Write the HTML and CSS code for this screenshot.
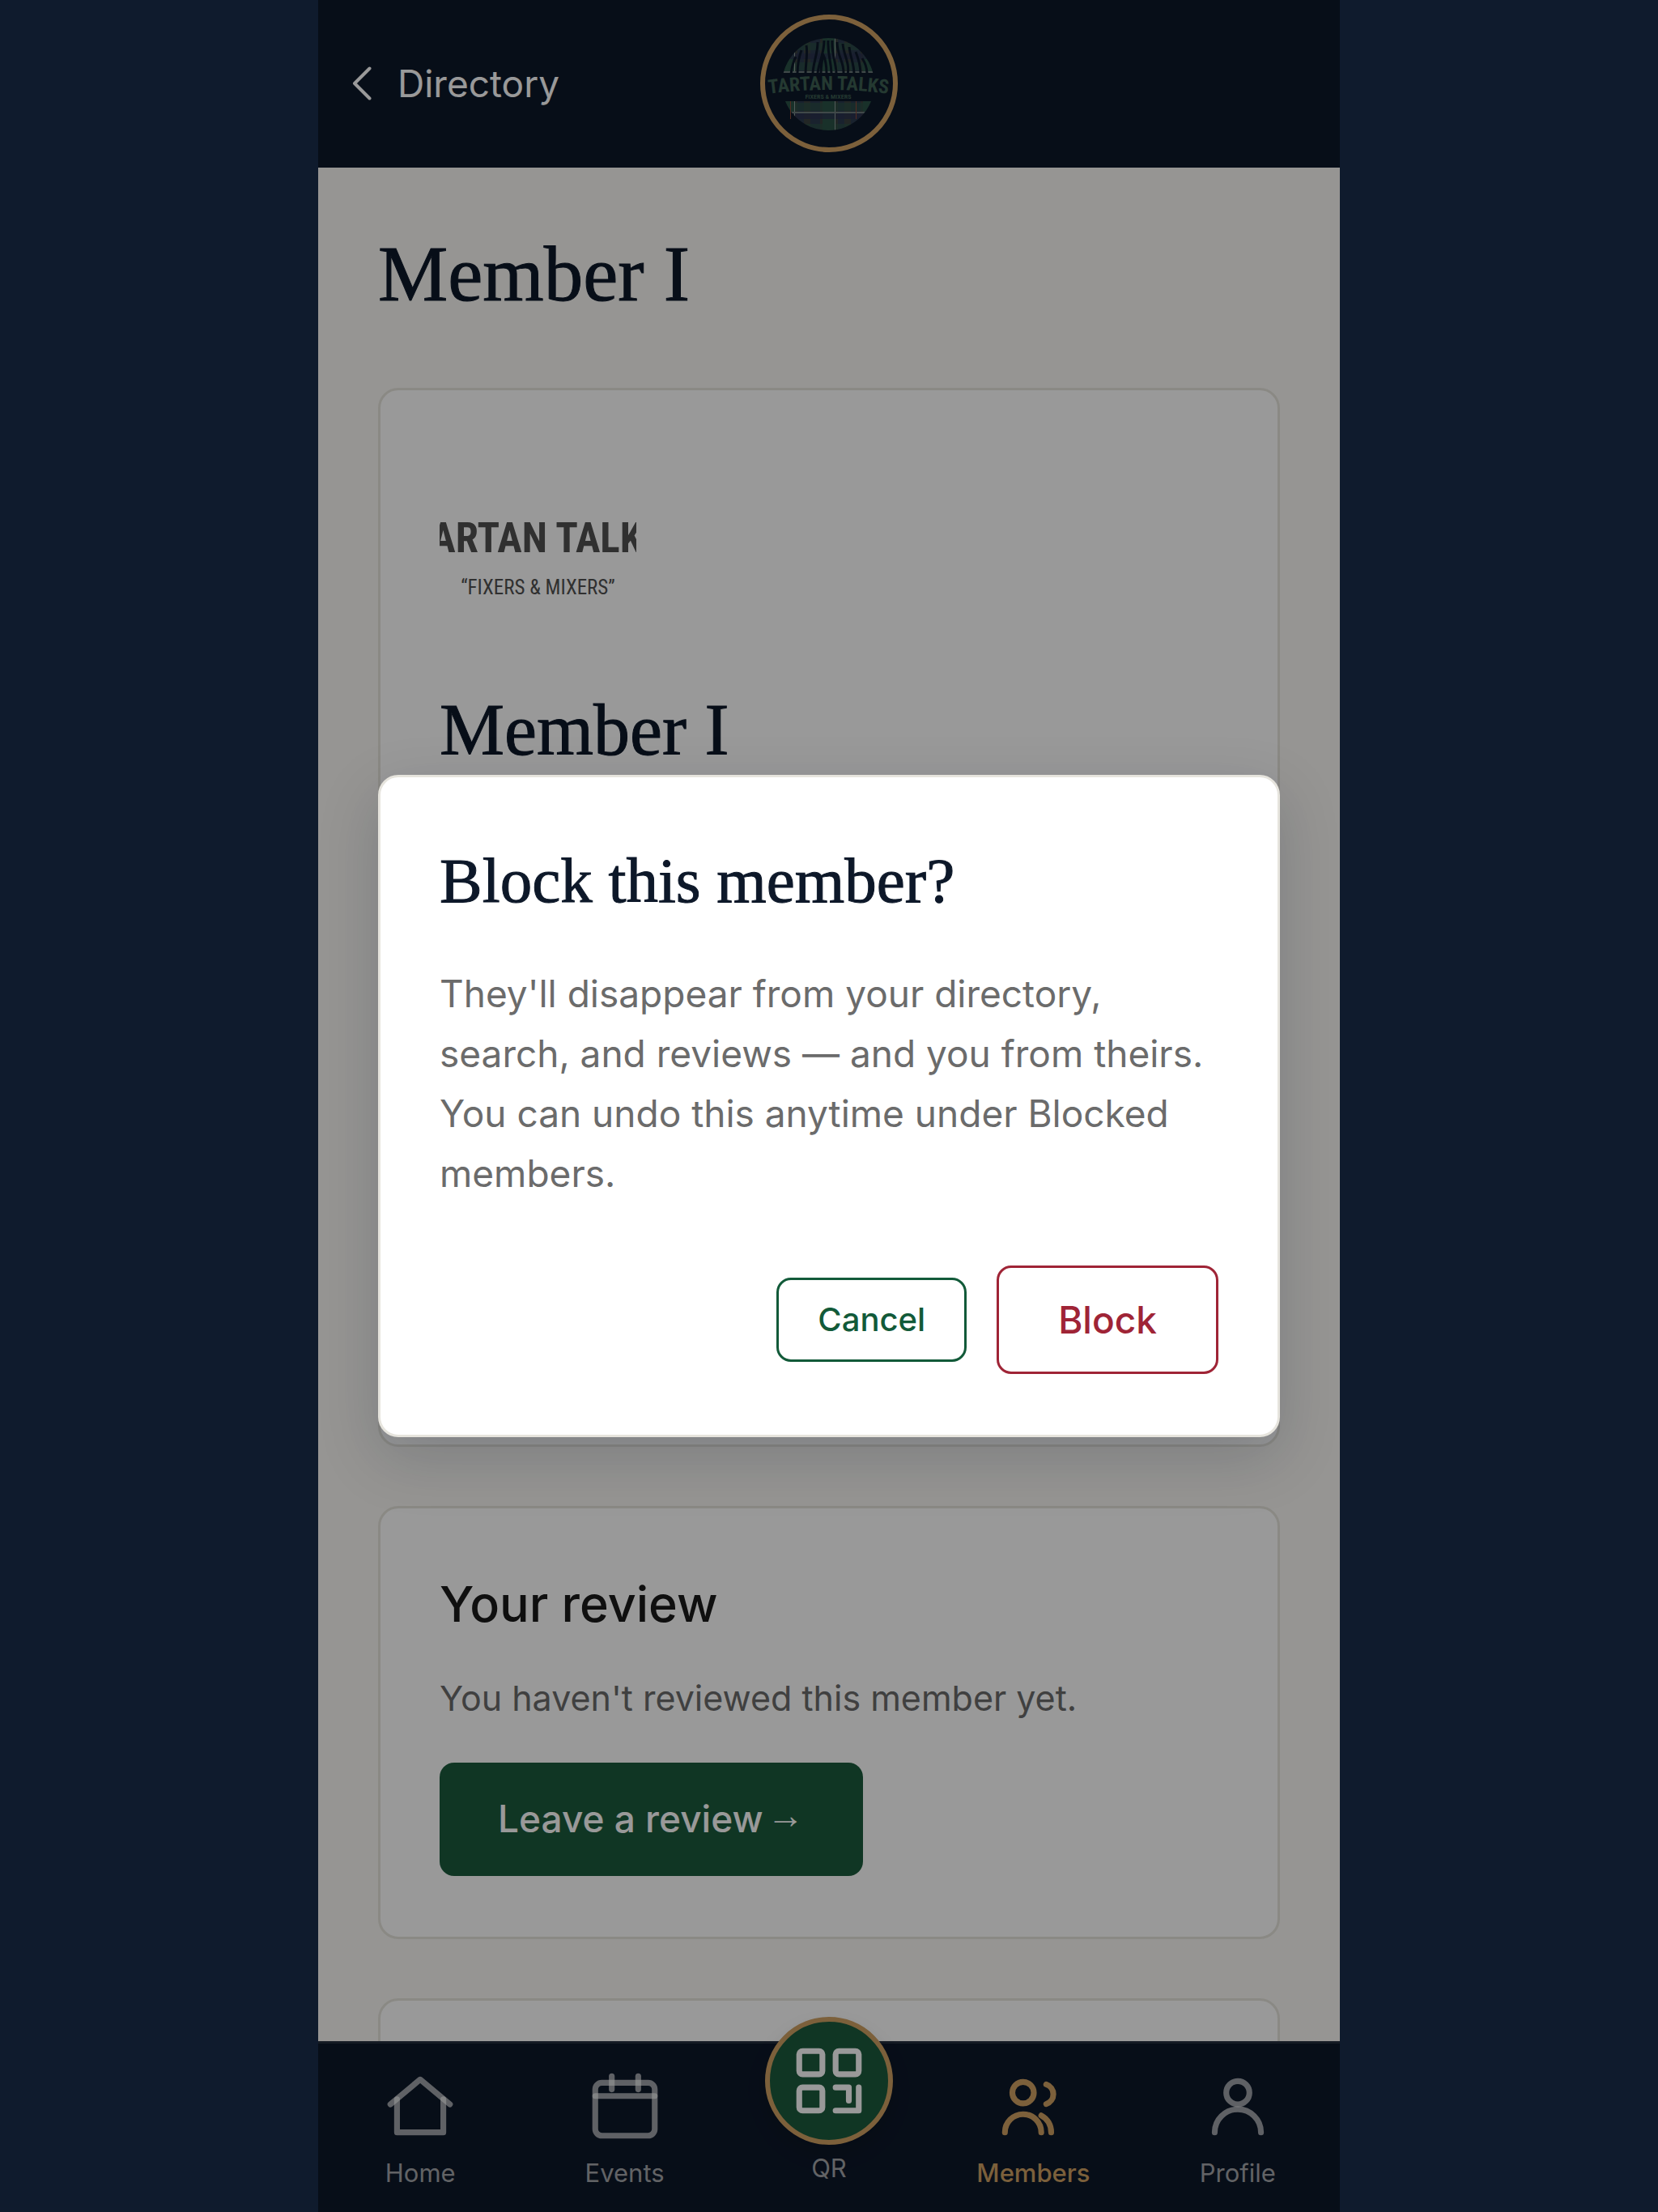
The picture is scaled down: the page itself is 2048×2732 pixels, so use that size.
FILE: index.html
```html
<!DOCTYPE html>
<html lang="en">
<head>
  <meta charset="utf-8">
  <meta name="viewport" content="width=device-width, initial-scale=1">
  <title>Member I – Tartan Talks</title>
  <link rel="stylesheet" href="styles.css">
</head>
<body>
  <div class="app">
    <header class="topbar">
      <a class="back" href="#directory">
        <svg class="back-icon" viewBox="0 0 24 42" aria-hidden="true"><path d="M21.500 2.500 3 21l18.500 18.500"/></svg>
        Directory
      </a>
      <a class="brand" href="#home" aria-label="Tartan Talks home">
        <svg viewBox="25 24 158 158" aria-hidden="true">
          <defs>
            <pattern id="tartan" width="50" height="50" x="81" y="89" patternUnits="userSpaceOnUse">
              <rect width="50" height="50" fill="#3a403e"/>
              <path fill="#2a3a4d" d="M0 0h12v50H0zM34 0h8v50h-8z"/>
              <path fill="#2a5346" d="M15 0h16v50H15z"/>
              <path fill="#2a5346" fill-opacity=".6" d="M0 38h50v10H0zM0 14h50v9H0z"/>
              <path fill="#2a3050" fill-opacity=".7" d="M0 0h50v8H0zM0 27h50v7H0z"/>
              <path stroke="#8a9a97" d="M30.500 0v50"/>
              <path stroke="#6c7a7b" stroke-width="2" d="M0 50h50M0 0h50"/>
            </pattern>
            <clipPath id="dome"><path d="M45 90h116V40H45z"/></clipPath>
            <clipPath id="bowl"><path d="M45 125h116v40H45z"/></clipPath>
            <path id="arch" d="M28 116Q103 106 179 116"/>
          </defs>
          <circle cx="103" cy="104" r="57" fill="url(#tartan)" clip-path="url(#dome)"/>
          <g class="grain" clip-path="url(#dome)">
            <path d="M57 92c1-9 3-16 6-22M65 92c0-12 2-22 5-30M75 92c0-14 3-25 1-36M84 92c0-14 6-24 6-40M90 92c0-12 8-24 8-42M94 92c0-9 2-22 3-24 3 6 4 16 4 24"/>
            <path d="M107 92c0-16-5-24-4-42M113 92c0-16-6-24-5-42M122 92c1-16-8-22-8-40M127 92c3-14-5-24-6-38M135 92c0-14-5-22-6-34M143 92c0-10-2-18-6-28M151 92c0-8-2-14-6-20"/>
          </g>
          <circle cx="103" cy="104" r="57" fill="url(#tartan)" clip-path="url(#bowl)"/>
          <path d="M56.500 125v22M137.500 125v22" stroke="#8a4a38" clip-path="url(#bowl)"/>
          <text class="logo-name"><textPath href="#arch" startOffset="50%">TARTAN TALKS</textPath></text>
          <text class="logo-tag" x="103" y="122">FIXERS &amp; MIXERS</text>
        </svg>
      </a>
    </header>

    <main class="content">
      <h1 class="page-title">Member I</h1>

      <section class="card card-profile">
        <div class="avatar" role="img" aria-label="Tartan Talks">
          <span class="avatar-name">TARTAN TALKS</span>
          <span class="avatar-tag">“FIXERS &amp; MIXERS”</span>
        </div>
        <h2 class="member-name">Member I</h2>
      </section>

      <section class="card">
        <h2 class="card-title">Your review</h2>
        <p class="card-text">You haven't reviewed this member yet.</p>
        <a class="button-primary" href="#review">Leave a review <span class="arrow">→</span></a>
      </section>

      <section class="card card-next"></section>
    </main>

    <nav class="tabbar" aria-label="Main">
      <a class="tab" href="#home">
        <svg class="tab-icon" viewBox="0 0 24 24" aria-hidden="true"><path d="M3 11.500 12 4l9 7.500"/><path d="M5 10v10h14V10"/></svg>
        Home
      </a>
      <a class="tab" href="#events">
        <svg class="tab-icon" viewBox="0 0 24 24" aria-hidden="true"><rect x="3" y="5" width="18" height="16" rx="2"/><path d="M3 9h18"/><path d="M8 3v4"/><path d="M16 3v4"/></svg>
        Events
      </a>
      <a class="tab tab-qr" href="#qr">
        <span class="qr-disc">
          <svg class="qr-icon" viewBox="0 0 24 24" aria-hidden="true"><rect x="3" y="3" width="7" height="7" rx="1"/><rect x="14" y="3" width="7" height="7" rx="1"/><rect x="3" y="14" width="7" height="7" rx="1"/><path d="M14 14h4v4M21 14v7h-7"/></svg>
        </span>
        QR
      </a>
      <a class="tab tab-active" href="#members" aria-current="page">
        <svg class="tab-icon" viewBox="0 0 24 24" aria-hidden="true"><path d="M12.250 8a3.250 3.250 0 1 0-6.500 0 3.250 3.250 0 1 0 6.500 0zM3.500 20a5.500 5.500 0 0 1 11 0M16 5.500a3.100 3.100 0 0 1 0 5.900M14.500 14.900c1.900 1 3 2.900 3 5.100"/></svg>
        Members
      </a>
      <a class="tab" href="#profile">
        <svg class="tab-icon" viewBox="0 0 24 24" aria-hidden="true"><circle cx="12" cy="8" r="3.500"/><path d="M5 20a7 7 0 0 1 14 0"/></svg>
        Profile
      </a>
    </nav>

    <div class="backdrop">
      <div class="modal" role="dialog" aria-modal="true" aria-labelledby="block-title">
        <h2 class="modal-title" id="block-title">Block this member?</h2>
        <p class="modal-text">They'll disappear from your directory, search, and reviews — and you from theirs. You can undo this anytime under Blocked members.</p>
        <div class="modal-actions">
          <button class="button-outline" type="button">Cancel</button>
          <button class="button-outline button-danger" type="button">Block</button>
        </div>
      </div>
    </div>
  </div>
</body>
</html>
```
FILE: styles.css
```css
:root {
  --navy: #0d1829;
  --gold: #cfa163;
  --green: #1c5b3c;
  --red: #9f2436;
  --line: #e6e4dd;
  --paper: #faf9f5;
  --serif: "Liberation Serif", "Times New Roman", serif;
  --sans: Inter, "Liberation Sans", sans-serif;
  --narrow: "Liberation Sans Narrow", "Roboto Condensed", Roboto, sans-serif;
}

*,
*::before,
*::after {
  box-sizing: border-box;
}

body {
  margin: 0;
  background: #0f1b2d;
  font-family: var(--sans);
  color: #191919;
}

h1,
h2,
p {
  margin: 0;
  font-weight: 400;
}

a {
  color: inherit;
  text-decoration: none;
}

.app {
  position: relative;
  display: flex;
  flex-direction: column;
  width: 100%;
  max-width: 1262px;
  height: 100vh;
  margin: 0 auto;
  overflow: hidden;
  background: var(--paper);
}

/* Header */
.topbar {
  flex: none;
  display: grid;
  grid-template-columns: 1fr auto 1fr;
  align-items: center;
  padding: 18px 42px 19px;
  background: var(--navy);
  color: #fff;
}

.back {
  display: flex;
  align-items: center;
  gap: 32px;
  font-size: 46px;
  line-height: 56px;
}

.back-icon {
  width: 24px;
  height: 42px;
  fill: none;
  stroke: currentColor;
  stroke-width: 4;
  stroke-linecap: round;
  stroke-linejoin: round;
}

.brand {
  width: 170px;
  height: 170px;
  border: 6px solid var(--gold);
  border-radius: 50%;
}

.brand svg {
  display: block;
  width: 100%;
  height: 100%;
}

.grain {
  fill: none;
  stroke: var(--navy);
  stroke-width: 3;
}

.logo-name,
.logo-tag {
  font-family: var(--narrow);
  font-weight: 700;
  text-anchor: middle;
  fill: #3c5f52;
}

.logo-name {
  font-size: 24px;
}

.logo-tag {
  font-size: 8px;
}

/* Page content */
.content {
  flex: 1;
  min-height: 0;
  display: flex;
  flex-direction: column;
  gap: 73px;
  padding: 78px 74px 0;
  overflow: hidden;
}

.content > * {
  flex: none;
}

.page-title,
.member-name,
.modal-title {
  font-family: var(--serif);
  color: var(--navy);
  -webkit-text-stroke: 1px currentColor;
}

.page-title {
  margin-bottom: 14px;
  font-size: 97px;
  line-height: 107px;
}

.card {
  display: flex;
  flex-direction: column;
  align-items: flex-start;
  padding: 75px 73px;
  border: 3px solid var(--line);
  border-radius: 25px;
  background: #fff;
}

.card-profile {
  min-height: 1308px;
}

.card-next {
  min-height: 300px;
}

.avatar {
  display: flex;
  flex-direction: column;
  align-items: center;
  justify-content: center;
  gap: 22px;
  width: 243px;
  height: 243px;
  padding-top: 18px;
  overflow: hidden;
  font-family: var(--narrow);
  color: #505050;
  white-space: nowrap;
}

.avatar-name {
  font-size: 51px;
  line-height: 54px;
  font-weight: 700;
}

.avatar-tag {
  font-size: 25px;
  line-height: 24px;
}

.member-name {
  margin-top: 52px;
  font-size: 90px;
  line-height: 100px;
}

.card-title {
  font-size: 61px;
  line-height: 86px;
  font-weight: 500;
}

.card-text {
  margin-top: 39px;
  font-size: 43px;
  line-height: 68px;
  color: #6b6b6b;
}

.button-primary {
  display: flex;
  align-items: center;
  gap: 5px;
  margin-top: 46px;
  padding: 41px 72px 43px;
  border-radius: 18px;
  background: var(--green);
  color: #fff;
  font-size: 46px;
  line-height: 56px;
  font-weight: 500;
}

.arrow {
  font-family: "Liberation Sans", sans-serif;
  font-weight: 700;
  line-height: 48px;
  padding-bottom: 8px;
}

/* Bottom navigation */
.tabbar {
  flex: none;
  display: grid;
  grid-template-columns: repeat(5, 1fr);
  min-height: 211px;
  border-top: 3px solid #232d3c;
  background: var(--navy);
  color: #a3a5a9;
}

.tab {
  display: flex;
  flex-direction: column;
  align-items: center;
  gap: 15px;
  padding-top: 28px;
  font-size: 31px;
  line-height: 38px;
}

.tab-icon,
.qr-icon {
  width: 98px;
  height: 98px;
  fill: none;
  stroke: currentColor;
  stroke-width: 1.75;
  stroke-linecap: round;
  stroke-linejoin: round;
}

/* Translucent strokes brighten where they cross */
.tab:not(.tab-active) .tab-icon {
  stroke: #fff;
  stroke-opacity: .6;
}

.tab-active {
  color: var(--gold);
  font-weight: 500;
}

.tab-qr {
  gap: 10px;
  padding-top: 0;
}

.qr-disc {
  display: grid;
  place-items: center;
  width: 158px;
  height: 158px;
  margin-top: -33px;
  border: 6px solid var(--gold);
  border-radius: 50%;
  background: var(--green);
  color: #fff;
  box-shadow: 0 12px 24px rgba(0, 0, 0, .12);
}

/* Confirmation dialog */
.backdrop {
  position: absolute;
  inset: 0;
  display: grid;
  align-items: center;
  padding: 74px;
  background: rgba(0, 0, 0, .4);
}

.modal {
  padding: 78px 73px 75px;
  border: 3px solid var(--line);
  border-radius: 25px;
  background: #fff;
  box-shadow: 0 25px 75px rgba(13, 24, 41, .18);
}

.modal-title {
  font-size: 79px;
  line-height: 100px;
}

.modal-text {
  margin-top: 52px;
  font-size: 46px;
  line-height: 74px;
  color: #6b6b6b;
}

.modal-actions {
  display: flex;
  align-items: center;
  justify-content: flex-end;
  gap: 37px;
  margin-top: 77px;
}

.button-outline {
  padding: 24px 48px;
  border: 3px solid currentColor;
  border-radius: 18px;
  background: #fff;
  color: #125a39;
  font-family: var(--sans);
  font-size: 40px;
  line-height: 50px;
  font-weight: 500;
}

.button-danger {
  padding: 36px 73px;
  color: var(--red);
  font-size: 46px;
  line-height: 56px;
}
```
